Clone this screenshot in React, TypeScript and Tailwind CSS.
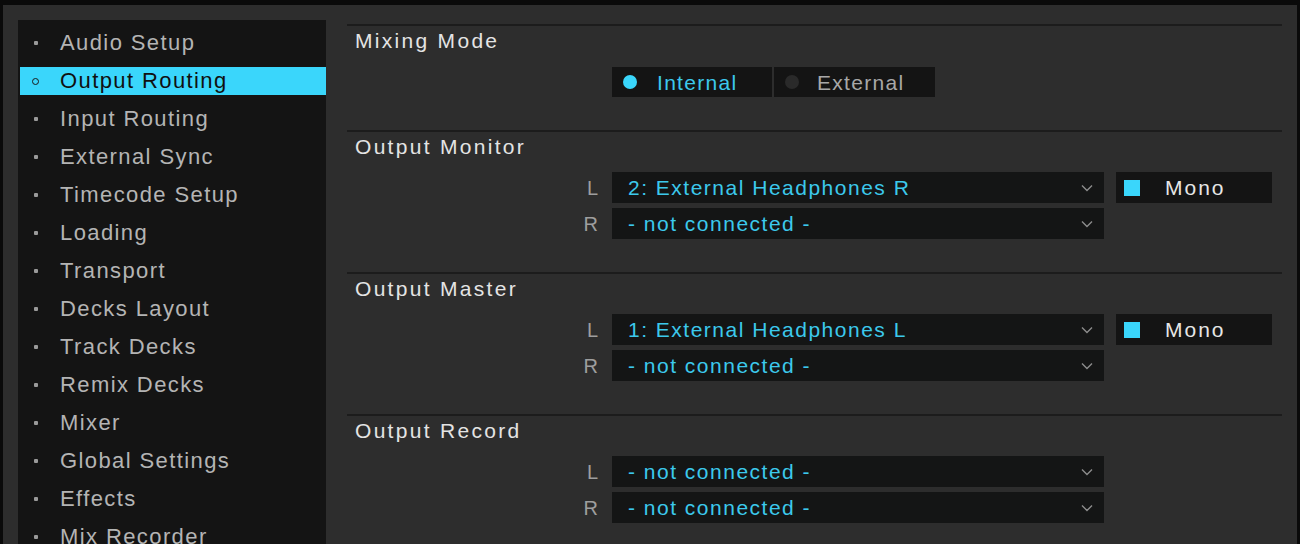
import React from 'react';

const menu = [
  'Audio Setup',
  'Output Routing',
  'Input Routing',
  'External Sync',
  'Timecode Setup',
  'Loading',
  'Transport',
  'Decks Layout',
  'Track Decks',
  'Remix Decks',
  'Mixer',
  'Global Settings',
  'Effects',
  'Mix Recorder',
  'Controller Manager',
];

const font = { fontFamily: '"Liberation Sans", Arial, sans-serif' };

function Chevron() {
  return (
    <svg width="14" height="8" viewBox="0 0 14 8" className="shrink-0">
      <path d="M2 1.5 L7 6.5 L12 1.5" fill="none" stroke="#8c8c8c" strokeWidth="1.4" />
    </svg>
  );
}

function Select({ value }: { value: string }) {
  return (
    <div className="w-[492px] h-[31px] bg-[#141515] flex items-center justify-between pl-[16px] pr-[10px]">
      <span className="text-[21px] tracking-[1.5px] text-[#3cc9ec] leading-none">{value}</span>
      <Chevron />
    </div>
  );
}

function Mono() {
  return (
    <div className="w-[156px] h-[31px] bg-[#141414] flex items-center pl-[8px] ml-[12px]">
      <div className="w-[16px] h-[16px] bg-[#3ad6fb]" />
      <span className="ml-[25px] text-[21px] tracking-[2px] text-[#e6e6e6] leading-none">Mono</span>
    </div>
  );
}

function Row({ label, value, mono }: { label: string; value: string; mono?: boolean }) {
  return (
    <div className="flex items-center pl-[231px]">
      <span className="w-[20px] mr-[14px] text-right text-[20px] text-[#9e9e9e] leading-none">{label}</span>
      <Select value={value} />
      {mono && <Mono />}
    </div>
  );
}

function Heading({ children }: { children: React.ReactNode }) {
  return (
    <div className="h-[30px] flex items-center pl-[8px] text-[21px] tracking-[2.3px] text-[#e4e4e4]">{children}</div>
  );
}

function Section({ title, children, last }: { title: string; children: React.ReactNode; last?: boolean }) {
  return (
    <div className={`border-t-2 border-[#1c1c1c] ${last ? 'pb-[10px]' : 'pb-[33px]'}`}>
      <Heading>{title}</Heading>
      <div className="mt-[10px] flex flex-col gap-[5px]">{children}</div>
    </div>
  );
}

export default function App() {
  return (
    <div
      className="w-[1300px] h-[544px] overflow-hidden bg-[#2d2d2d] border-t-[5px] border-x-[3px] border-[#0a0a0a] flex pl-[15px] pr-[15px] pt-[15px]"
      style={font}
    >
      {/* Sidebar */}
      <div className="w-[308px] shrink-0 bg-[#141414] pt-[9px] flex flex-col gap-[10px]">
        {menu.map((item, i) => {
          const active = i === 1;
          return (
            <div
              key={item}
              className={`h-[28px] ml-[2px] flex items-center shrink-0 ${active ? 'bg-[#3ad6fb]' : ''}`}
            >
              <div className="w-[40px] flex justify-center pr-[9px]">
                {active ? (
                  <div className="w-[7px] h-[7px] rounded-full border-[1.5px] border-[#1a1a1a]" />
                ) : (
                  <div className="w-[4px] h-[4px] rounded-[1px] bg-[#9a9a9a]" />
                )}
              </div>
              <span
                className={`text-[22px] tracking-[1.4px] leading-none ${active ? 'text-[#101010]' : 'text-[#b4b4b4]'}`}
              >
                {item}
              </span>
            </div>
          );
        })}
      </div>

      {/* Content */}
      <div className="flex-1 ml-[21px] mt-[4px]">
        <div className="border-t-2 border-[#1c1c1c] pb-[33px]">
          <Heading>Mixing Mode</Heading>
          <div className="mt-[11px] flex pl-[265px] gap-[2px]">
            <div className="w-[160px] h-[30px] bg-[#141414] flex items-center pl-[11px]">
              <div className="w-[14px] h-[14px] rounded-full bg-[#3ad6fb]" />
              <span className="ml-[20px] text-[21px] tracking-[1.3px] text-[#3cc9ec] leading-none">Internal</span>
            </div>
            <div className="w-[161px] h-[30px] bg-[#141414] flex items-center pl-[11px]">
              <div className="w-[14px] h-[14px] rounded-full bg-[#2a2a2a]" />
              <span className="ml-[18px] text-[21px] tracking-[1.3px] text-[#a8a8a8] leading-none">External</span>
            </div>
          </div>
        </div>

        <Section title="Output Monitor">
          <Row label="L" value="2: External Headphones R" mono />
          <Row label="R" value="- not connected -" />
        </Section>

        <Section title="Output Master">
          <Row label="L" value="1: External Headphones L" mono />
          <Row label="R" value="- not connected -" />
        </Section>

        <Section title="Output Record" last>
          <Row label="L" value="- not connected -" />
          <Row label="R" value="- not connected -" />
        </Section>
      </div>
    </div>
  );
}
